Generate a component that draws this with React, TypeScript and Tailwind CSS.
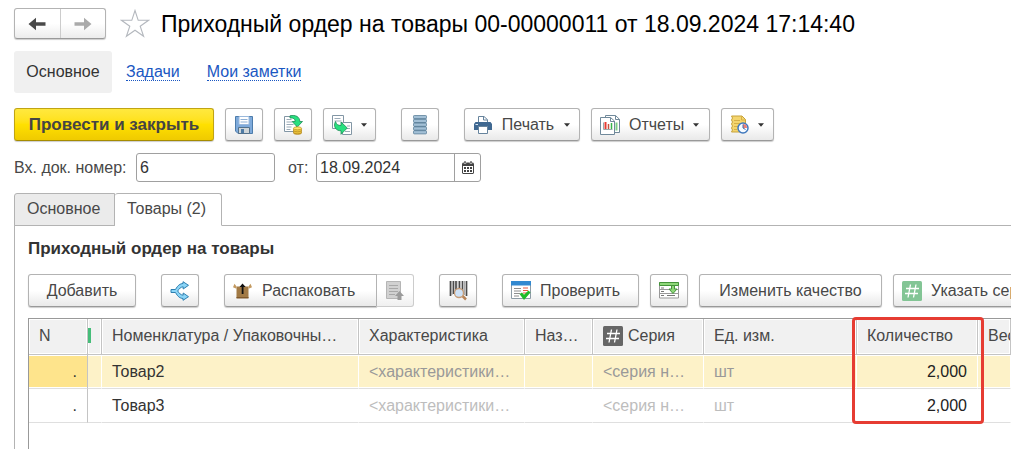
import type { ReactNode } from "react";

const Caret = () => (
  <svg width="6" height="4" viewBox="0 0 6 4" className="shrink-0" aria-hidden="true">
    <path d="M0 0.3h6L3 3.7z" fill="#333" />
  </svg>
);

const btn =
  "flex h-[33px] shrink-0 items-center whitespace-nowrap rounded-[3px] border border-[#b3b3b3] border-b-[#999] bg-linear-to-b from-white from-50% to-[#e9e9e9] text-[#484848] shadow-[0_1px_1px_#ccc]";

function ToolButton({ label, className = "justify-center", children }: { label?: string; className?: string; children: ReactNode }) {
  return (
    <button type="button" aria-label={label} className={`${btn} ${className}`}>
      {children}
    </button>
  );
}

const ArrowIcon = ({ flip = false, color }: { flip?: boolean; color: string }) => (
  <svg width="18" height="14" viewBox="0 0 18 14" className={flip ? "rotate-180" : ""} aria-hidden="true">
    <path d="M0.500 7L8 0.800v4.500h9.500v3.400H8v4.500z" fill={color} />
  </svg>
);

const StarIcon = () => (
  <svg width="30" height="29" viewBox="0 0 30 29" aria-hidden="true">
    <path d="M15 1.500l3.200 9.800h10.300l-8.300 6 3.400 10L15 21.200l-8.600 6.100 3.400-10-8.300-6h10.300z" fill="#fff" stroke="#b4b8be" strokeWidth="1.100" />
  </svg>
);

const SaveIcon = () => (
  <svg width="20" height="20" viewBox="0 0 20 20" className="shrink-0" aria-hidden="true">
    <path d="M1.500 1.500h17v17H4l-2.500-2.500z" fill="#7eaadb" stroke="#4d7cab" />
    <path d="M5 1.500h10v8H5z" fill="#fff" stroke="#9ab9dc" />
    <path d="M6.500 4.500h7M6.500 7h7" stroke="#8fb0d5" />
    <path d="M4.500 12.500h11v6h-11z" fill="#cfd5d8" stroke="#54728c" />
    <path d="M7 14h3v4H7z" fill="#4e7ba5" />
  </svg>
);

const PostIcon = () => (
  <svg width="20" height="20" viewBox="0 0 20 20" className="shrink-0" aria-hidden="true">
    <path d="M1.500 1.500h12v15h-12z" fill="#fff" stroke="#8296a5" />
    <path d="M3.500 4.500h5M3.500 7h6M3.500 9.500h7M3.500 12h5M3.500 14.500h4" stroke="#9babb7" />
    <path d="M7 .8c5.500-1.300 9.800 1 9.800 5.700h2.700L14.300 12 9.200 6.500h3c0-2.500-1.800-4-5.200-3.500z" fill="#28e07f" stroke="#1d8a57" strokeWidth=".8" />
    <path d="M10.500 13.500v4.500c0 1.800 8 1.800 8 0v-4.500" fill="#edc63d" stroke="#b98e22" strokeWidth=".7" />
    <path d="M10.500 15.700c1 1.500 7 1.500 8 0M10.500 17.700c1 1.500 7 1.500 8 0" fill="none" stroke="#a87b17" strokeWidth=".6" />
    <ellipse cx="14.500" cy="13.300" rx="4" ry="1.500" fill="#ffe66c" stroke="#b98e22" strokeWidth=".7" />
  </svg>
);

const CreateFromIcon = () => (
  <svg width="20" height="20" viewBox="0 0 20 20" className="shrink-0" aria-hidden="true">
    <path d="M.5.500h11v13H.5z" fill="#fff" stroke="#8296a5" />
    <path d="M2.500 3.500h6M2.500 6h7" stroke="#9babb7" />
    <path d="M10.500 7.500h9v12h-9z" fill="#fff" stroke="#8296a5" />
    <path d="M15 11h3M15 13.500h3M13 16.500h5" stroke="#9babb7" />
    <path d="M3.500 6.500C4.500 9.500 6 10.500 9 10.500V7l6.300 6L9 19.300v-3.600C4 16 .8 11.500 3.500 6.500z" fill="#28e07f" stroke="#1d8a57" strokeWidth=".8" />
  </svg>
);

const StackIcon = () => (
  <svg width="14" height="20" viewBox="0 0 14 20" className="shrink-0" aria-hidden="true">
    <path d="M1 1h12v18H1z" fill="#6f93af" />
    {[1, 4.800, 8.600, 12.400, 16.200].map((y) => (
      <rect key={y} x=".5" y={y - 0.500} width="13" height="3.200" rx=".8" fill="#a3c0d6" stroke="#5e819b" strokeWidth=".8" />
    ))}
  </svg>
);

const PrinterIcon = () => (
  <svg width="18" height="18" viewBox="0 0 18 18" className="shrink-0" aria-hidden="true">
    <path d="M4.500 7V.5h5.500l3.500 3.200V7" fill="#fff" stroke="#66839c" />
    <path d="M9.500.500V4h4" fill="none" stroke="#66839c" />
    <path d="M1.500 6h15L18 8v6H0V8z" fill="#3f6891" />
    <path d="M1.500 8h2.500v1H1.500z" fill="#d7e5f1" />
    <path d="M4.500 10.500h9v7h-9z" fill="#fff" stroke="#66839c" />
  </svg>
);

const ReportIcon = () => (
  <svg width="20" height="20" viewBox="0 0 20 20" className="shrink-0" aria-hidden="true">
    <path d="M5.500.500h10l4 3.800v13.200h-14z" fill="#fff" stroke="#70899a" />
    <path d="M15.500.500V4.500h4" fill="none" stroke="#70899a" />
    <path d="M16.500 7.500v8" stroke="#7dcf86" strokeWidth="2" />
    <path d="M.5 2.500h10l4 3.500v13.500H.5z" fill="#fff" stroke="#70899a" />
    <path d="M10.500 2.500V6.500h4" fill="none" stroke="#70899a" />
    <path d="M3.500 7.500V14.500h9" fill="none" stroke="#9aa" />
    <path d="M5.500 7v7" stroke="#e83b32" strokeWidth="2" />
    <path d="M8.500 9v5" stroke="#c9503c" strokeWidth="1.500" />
    <path d="M11.500 8v6" stroke="#36b54a" strokeWidth="1.500" />
  </svg>
);

const ScheduleIcon = () => (
  <svg width="19" height="19" viewBox="0 0 19 19" className="shrink-0" aria-hidden="true">
    <path d="M1.500 1h10.500l3.500 3.500V17h-14l1-2-1-2 1-2-1-2 1-2-1-2 1-2z" fill="#f4d56e" stroke="#c7a23a" />
    <path d="M11.500 1v4h4M4 5.500h6M4 8.500h7M4 11.500h4M4 14.500h3" fill="none" stroke="#d6b047" />
    <circle cx="13" cy="13" r="5" fill="#f7fbff" stroke="#4179be" strokeWidth="1.500" />
    <path d="M13 13V9a4 4 0 0 1 4 4z" fill="#ed8078" />
    <path d="M13 9.500V13l2.500 1.500" fill="none" stroke="#3c6cab" />
  </svg>
);

const CalendarIcon = () => (
  <svg width="12" height="13" viewBox="0 0 12 13" className="shrink-0" aria-hidden="true">
    <path d="M1 1.500h10l1 1v9.500l-1 1H1l-1-1V2.500z" fill="#444" />
    <path d="M2 0h2v2.500H2zM8 0h2v2.500H8z" fill="#444" stroke="#fff" strokeWidth=".5" />
    <path d="M1 5h10v7H1z" fill="#fff" />
    <path d="M2 6h2v2H2zM5 6h2v2H5zM8 6h2v2H8zM2 9h2v2H2zM5 9h2v2H5zM8 9h2v2H8z" fill="#444" />
  </svg>
);

const SplitIcon = () => (
  <svg width="20" height="20" viewBox="0 0 20 20" className="shrink-0" aria-hidden="true">
    <path d="M1 8.500h4.500C8 4 10 2.800 13 2.500V.7l5.500 3.600L13.200 8V5.800c-2.500.3-4 1.700-5.500 4.200 1.500 2.500 3 3.900 5.500 4.200V12l5.300 3.700-5.500 3.600v-1.800C10 17.200 8 16 5.500 11.500H1z" fill="#8bd5f7" stroke="#2e7fb0" />
  </svg>
);

const BoxIcon = () => (
  <svg width="19" height="16" viewBox="0 0 19 16" className="shrink-0" aria-hidden="true">
    <path d="M3.500 3.500h12V15h-12z" fill="#a27a45" />
    <path d="M3.500 3.500L1.500.8 0 4.300l3.500 1.500zM15.500 3.500l2-2.700L19 4.300l-3.500 1.500z" fill="#c49a60" />
    <path d="M3.500 14h12v1.500h-12z" fill="#80592b" />
    <path d="M9.500 0.500L6.500 4h2.200v7h1.800V4h2.200z" fill="#111" />
  </svg>
);

const PageUpIcon = () => (
  <svg width="18" height="20" viewBox="0 0 18 20" className="shrink-0" aria-hidden="true">
    <path d="M.5.500h14v17H.5z" fill="#d1d1d1" stroke="#b5b5b5" />
    <path d="M3 4.500h9M3 7.500h9M3 10.500h9M3 13.500h6" stroke="#a8a8a8" />
    <path d="M13.500 10l4.500 5h-2.500v4h-4v-4H9z" fill="#9b9b9b" />
  </svg>
);

const BarcodeIcon = () => (
  <svg width="19" height="20" viewBox="0 0 19 20" className="shrink-0" aria-hidden="true">
    <path d="M1.500 0v15M4.500 0v13M7 0v13M10.500 0v13M13.500 0v13M17.500 0v15" stroke="#4b4b4b" strokeWidth="1.700" />
    <path d="M3 0v14M9 0v13M15.500 0v14" stroke="#888" strokeWidth=".7" />
    <path d="M13 14.500l4 4" stroke="#b98559" strokeWidth="2.500" />
    <circle cx="10" cy="12" r="4.500" fill="#cfe2f6" stroke="#c79d78" strokeWidth="1.300" />
  </svg>
);

const CheckIcon = () => (
  <svg width="20" height="20" viewBox="0 0 20 20" className="shrink-0" aria-hidden="true">
    <path d="M.5.500h19v17H.5z" fill="#fff" stroke="#8d9ba5" />
    <path d="M0 0h20v4.500H0z" fill="#3289d1" />
    <path d="M3 7.500h7M3 10h7M3 12.500h6M3 15h5" stroke="#8e8e8e" />
    <path d="M12 7h5M12 9.500h5M12 12h5" stroke="#e85843" strokeWidth="1.200" />
    <path d="M8.500 13l2.500-1.500 2 2.200 4.500-4.200 2 2-6.500 7.500z" fill="#1fbb28" />
  </svg>
);

const FillDownIcon = () => (
  <svg width="20" height="17" viewBox="0 0 20 17" className="shrink-0" aria-hidden="true">
    <path d="M.5.500h19v15.500H.5z" fill="#fff" stroke="#999" />
    <path d="M0 7.500h20M0 11.500h20" stroke="#999" />
    <path d="M2 6h3M2 9.500h3M2 13.500h3M8 13.500h8" stroke="#777" />
    <path d="M.5.500h19v3H.5z" fill="#8ed779" stroke="#45933a" />
    <path d="M12.500 3.500h3V7h2.500l-4 4.500L10 7h2.500z" fill="#8ed779" stroke="#45933a" />
  </svg>
);

const HashIcon = ({ color }: { color: string }) => (
  <svg width="20" height="20" viewBox="0 0 20 20" className="shrink-0" aria-hidden="true">
    <rect width="20" height="20" rx="1.500" fill={color} />
    <path d="M8.500 3.500L6 16.500M14 3.500l-2.500 13M4 7.500h13M3 12.500h13" stroke="#fff" strokeWidth="1.300" />
  </svg>
);

const headBase =
  "h-[36px] overflow-hidden whitespace-nowrap border-b border-r border-[#c4c4c4] bg-[#f1f1f1] pb-[2px] text-left align-middle font-normal text-[#484848] shadow-[inset_0_0_0_1px_#fff]";
const headCell = `${headBase} pl-[10px]`;
const bodyCell =
  "h-[34px] overflow-hidden whitespace-nowrap border-b border-b-[#dfdfdf] pl-[10px] align-middle shadow-[inset_0_1px_#fff,inset_0_-1px_#fff] border-r";

function GoodsRow({ name, selected = false }: { name: string; selected?: boolean }) {
  const cell = `${bodyCell} ${selected ? "bg-[#fdf2c8] border-r-white" : "border-r-transparent"}`;
  const muted = selected ? "text-[#999]" : "text-[#bdbdbd]";
  return (
    <tr aria-selected={selected}>
      <td className={`${bodyCell} border-r-[#c4c4c4] pr-[10px] text-right text-[#333] ${selected ? "bg-[#fee48c]" : ""}`}>.</td>
      <td className={cell} />
      <td className={`${cell} text-[#333]`}>{name}</td>
      <td className={`${cell} ${muted}`}>&lt;характеристики…</td>
      <td className={cell} />
      <td className={`${cell} ${muted}`}>&lt;серия н…</td>
      <td className={`${cell} ${muted}`}>шт</td>
      <td className={`${cell} pr-[10px] text-right text-[#222]`}>2,000</td>
      <td className={cell} />
    </tr>
  );
}

export default function App() {
  return (
    <main className="min-h-screen overflow-hidden bg-white pt-2 pl-[14px] font-['Liberation_Sans',Arial,sans-serif] text-[16px] leading-5 text-[#484848]">
      <header className="flex h-[31px] items-center">
        <div className="flex h-[31px] w-[92px] shrink-0 overflow-hidden rounded-[3px] border border-[#b3b3b3] border-b-[#999] bg-linear-to-b from-white from-50% to-[#ececec] shadow-[0_1px_1px_#ccc]">
          <button type="button" aria-label="Назад" className="flex flex-1 items-center justify-center border-r border-[#ccc]">
            <ArrowIcon color="#484848" />
          </button>
          <button type="button" aria-label="Вперед" className="flex flex-1 items-center justify-center">
            <ArrowIcon color="#aaa" flip />
          </button>
        </div>
        <button type="button" aria-label="В избранное" className="ml-[14px] shrink-0">
          <StarIcon />
        </button>
        <h1 className="ml-[11px] whitespace-nowrap text-[23px] leading-7 text-black">
          Приходный ордер на товары 00-00000011 от 18.09.2024 17:14:40
        </h1>
      </header>

      <nav className="mt-3 flex h-[42px] items-center">
        <span className="flex h-full w-[98px] items-center justify-center rounded-[3px] bg-[#f0f0f0] text-[#333]">Основное</span>
        <a href="#tasks" className="ml-[14px] border-b border-dotted border-[#1a57c2] leading-[17px] text-[#1a57c2]">Задачи</a>
        <a href="#notes" className="ml-[27px] border-b border-dotted border-[#1a57c2] leading-[17px] text-[#1a57c2]">Мои заметки</a>
      </nav>

      <div className="mt-[15px] flex items-center gap-[11px]">
        <button
          type="button"
          className="h-[33px] w-[200px] shrink-0 rounded-[3px] border border-[#c0a414] border-b-[#a58b00] bg-linear-to-b from-[#ffe83e] via-[#ffe000] to-[#efca00] text-[17px] font-bold text-[#444] shadow-[0_1px_1px_#ccc]"
        >
          Провести и закрыть
        </button>
        <ToolButton label="Записать" className="w-[38px] justify-center"><SaveIcon /></ToolButton>
        <ToolButton label="Провести" className="w-[38px] justify-center"><PostIcon /></ToolButton>
        <ToolButton label="Создать на основании" className="w-[53px] gap-[9px] pl-2"><CreateFromIcon /><Caret /></ToolButton>
        <ToolButton label="Структура" className="ml-[14px] w-[38px] justify-center"><StackIcon /></ToolButton>
        <ToolButton className="ml-[14px] w-[116px] justify-center gap-[10px]"><PrinterIcon />Печать<Caret /></ToolButton>
        <ToolButton className="w-[119px] gap-[9px] pl-2"><ReportIcon />Отчеты<Caret /></ToolButton>
        <ToolButton label="Напоминания" className="w-[53px] gap-[9px] pl-2"><ScheduleIcon /><Caret /></ToolButton>
      </div>

      <div className="mt-3 flex h-[29px] items-center">
        <label htmlFor="number" className="w-[122px] shrink-0 whitespace-nowrap">Вх. док. номер:</label>
        <input id="number" defaultValue="6" className="h-[29px] w-[139px] rounded-[3px] border border-[#a0a0a0] px-[3px] text-[#333] outline-none" />
        <label htmlFor="date" className="ml-[13px] w-[28px]">от:</label>
        <div className="flex h-[29px] w-[165px] overflow-hidden rounded-[3px] border border-[#a0a0a0]">
          <input id="date" defaultValue="18.09.2024" className="w-0 flex-1 px-[3px] text-[#333] outline-none" />
          <button type="button" aria-label="Выбрать дату" className="flex w-[26px] items-center justify-center border-l border-[#a0a0a0]">
            <CalendarIcon />
          </button>
        </div>
      </div>

      <div role="tablist" className="relative z-10 mt-[11px] flex h-[33px]">
        <button type="button" role="tab" aria-selected="false" className="w-[101px] rounded-tl-[3px] border border-[#b3b3b3] bg-[#ebebeb] pl-3 pb-[2px] text-left text-[#484848]">
          Основное
        </button>
        <button type="button" role="tab" aria-selected="true" className="w-[107px] rounded-t-[3px] border border-l-0 border-[#b3b3b3] border-b-white bg-white pl-3 pb-[2px] text-left text-[#484848]">
          Товары (2)
        </button>
      </div>

      <section className="-mt-px border-t border-l border-[#b3b3b3] pt-[13px] pl-[13px]">
        <h2 className="text-[17px] leading-5 font-bold text-[#333]">Приходный ордер на товары</h2>
        <div className="mt-[15px] flex items-center gap-[11px]">
          <ToolButton className="w-[108px] justify-center">Добавить</ToolButton>
          <ToolButton label="Разбить строку" className="ml-[14px] w-[38px] justify-center"><SplitIcon /></ToolButton>
          <div className="ml-[14px] flex">
            <ToolButton className="w-[153px] gap-[10px] rounded-r-none pl-2"><BoxIcon />Распаковать</ToolButton>
            <button type="button" disabled aria-label="Упаковочный лист" className="flex h-[33px] w-[37px] items-center justify-center rounded-r-[3px] border border-l-0 border-[#ccc] bg-linear-to-b from-white from-50% to-[#f0f0f0]">
              <PageUpIcon />
            </button>
          </div>
          <ToolButton label="Поиск по штрихкоду" className="ml-[14px] w-[38px] justify-center"><BarcodeIcon /></ToolButton>
          <ToolButton className="ml-[14px] w-[137px] gap-[9px] pl-2"><CheckIcon />Проверить</ToolButton>
          <ToolButton label="Заполнить" className="w-[38px] justify-center"><FillDownIcon /></ToolButton>
          <ToolButton className="w-[183px] justify-center">Изменить качество</ToolButton>
          <ToolButton className="gap-[9px] px-2"><HashIcon color="#83c595" />Указать серии</ToolButton>
        </div>

        <div className="relative mt-[11px] min-h-[131px] border-t border-l border-[#999]">
          <table className="w-full table-fixed border-separate border-spacing-0">
            <colgroup>
              <col className="w-[59px]" />
              <col className="w-[14px]" />
              <col className="w-[257px]" />
              <col className="w-[166px]" />
              <col className="w-[68px]" />
              <col className="w-[111px]" />
              <col className="w-[153px]" />
              <col className="w-[121px]" />
              <col />
            </colgroup>
            <thead>
              <tr>
                <th className={headCell}>N</th>
                <th className={headBase} aria-label="Состояние"><div className="h-[15px] w-[3px] bg-[#46bd79]" /></th>
                <th className={headCell}>Номенклатура / Упаковочны…</th>
                <th className={headCell}>Характеристика</th>
                <th className={headCell}>Наз…</th>
                <th className={headCell}><div className="flex items-center gap-[5px]"><HashIcon color="#666" />Серия</div></th>
                <th className={headCell}>Ед. изм.</th>
                <th className={headCell}>Количество</th>
                <th className={headCell}>Вес</th>
              </tr>
            </thead>
            <tbody>
              <GoodsRow name="Товар2" selected />
              <GoodsRow name="Товар3" />
            </tbody>
          </table>
          <div className="pointer-events-none absolute -top-[2px] left-[823px] h-[107px] w-[132px] rounded-[4px] border-[3px] border-[#e63c32]" />
        </div>
      </section>
    </main>
  );
}
